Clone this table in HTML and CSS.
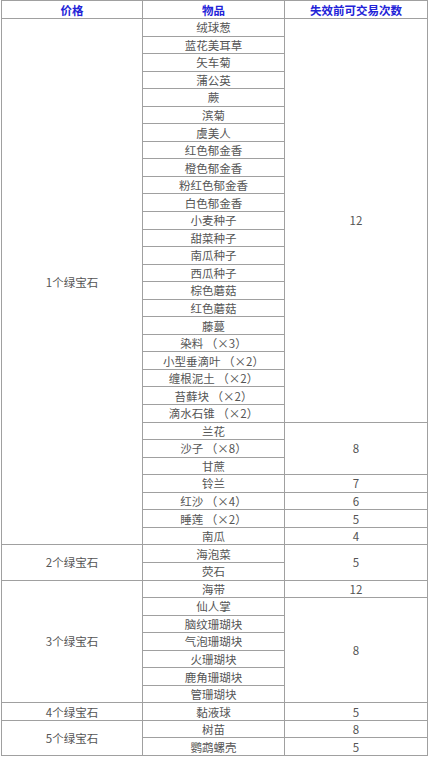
FILE: index.html
```html
<!DOCTYPE html>
<html lang="zh-CN">
<head>
<meta charset="utf-8">
<title>绿宝石交易</title>
<link rel="stylesheet" href="styles.css">
</head>
<body>
<table class="trade">
  <colgroup><col class="c1"><col class="c2"><col class="c3"></colgroup>
  <thead>
    <tr class="head"><th>价格</th><th>物品</th><th>失效前可交易次数</th></tr>
  </thead>
  <tbody>
    <tr><td rowspan="30">1个绿宝石</td><td>绒球葱</td><td rowspan="23">12</td></tr>
    <tr><td>蓝花美耳草</td></tr>
    <tr><td>矢车菊</td></tr>
    <tr><td>蒲公英</td></tr>
    <tr><td>蕨</td></tr>
    <tr><td>滨菊</td></tr>
    <tr><td>虞美人</td></tr>
    <tr><td>红色郁金香</td></tr>
    <tr><td>橙色郁金香</td></tr>
    <tr><td>粉红色郁金香</td></tr>
    <tr><td>白色郁金香</td></tr>
    <tr><td>小麦种子</td></tr>
    <tr><td>甜菜种子</td></tr>
    <tr><td>南瓜种子</td></tr>
    <tr><td>西瓜种子</td></tr>
    <tr><td>棕色蘑菇</td></tr>
    <tr><td>红色蘑菇</td></tr>
    <tr><td>藤蔓</td></tr>
    <tr><td>染料 （×3）</td></tr>
    <tr><td>小型垂滴叶 （×2）</td></tr>
    <tr><td>缠根泥土 （×2）</td></tr>
    <tr><td>苔藓块 （×2）</td></tr>
    <tr><td>滴水石锥 （×2）</td></tr>
    <tr><td>兰花</td><td rowspan="3">8</td></tr>
    <tr><td>沙子 （×8）</td></tr>
    <tr><td>甘蔗</td></tr>
    <tr><td>铃兰</td><td>7</td></tr>
    <tr><td>红沙 （×4）</td><td>6</td></tr>
    <tr><td>睡莲 （×2）</td><td>5</td></tr>
    <tr><td>南瓜</td><td>4</td></tr>
    <tr><td rowspan="2">2个绿宝石</td><td>海泡菜</td><td rowspan="2">5</td></tr>
    <tr><td>荧石</td></tr>
    <tr><td rowspan="7">3个绿宝石</td><td>海带</td><td>12</td></tr>
    <tr><td>仙人掌</td><td rowspan="6">8</td></tr>
    <tr><td>脑纹珊瑚块</td></tr>
    <tr><td>气泡珊瑚块</td></tr>
    <tr><td>火珊瑚块</td></tr>
    <tr><td>鹿角珊瑚块</td></tr>
    <tr><td>管珊瑚块</td></tr>
    <tr><td>4个绿宝石</td><td>黏液球</td><td>5</td></tr>
    <tr><td rowspan="2">5个绿宝石</td><td>树苗</td><td>8</td></tr>
    <tr><td>鹦鹉螺壳</td><td>5</td></tr>
  </tbody>
</table>
</body>
</html>
```
FILE: styles.css
```css
html, body {
  margin: 0;
  padding: 0;
  background: #ffffff;
}

.trade {
  border-collapse: collapse;
  table-layout: fixed;
  width: 426px;
  margin: 0 0 0 1px;
  font-family: "Noto Sans CJK SC", "Noto Sans", sans-serif;
  font-size: 11.5px;
  color: #555555;
}

.c1 { width: 141px; }
.c2 { width: 142px; }
.c3 { width: 143px; }

.trade th,
.trade td {
  border: 1px solid #a0a0a0;
  padding: 0;
  text-align: center;
  vertical-align: middle;
  line-height: 14px;
  overflow: hidden;
  white-space: nowrap;
}

.trade .head th {
  height: 17px;
  color: #2323d8;
  font-weight: bold;
}

.trade tbody tr {
  height: 17.55px;
}
```
